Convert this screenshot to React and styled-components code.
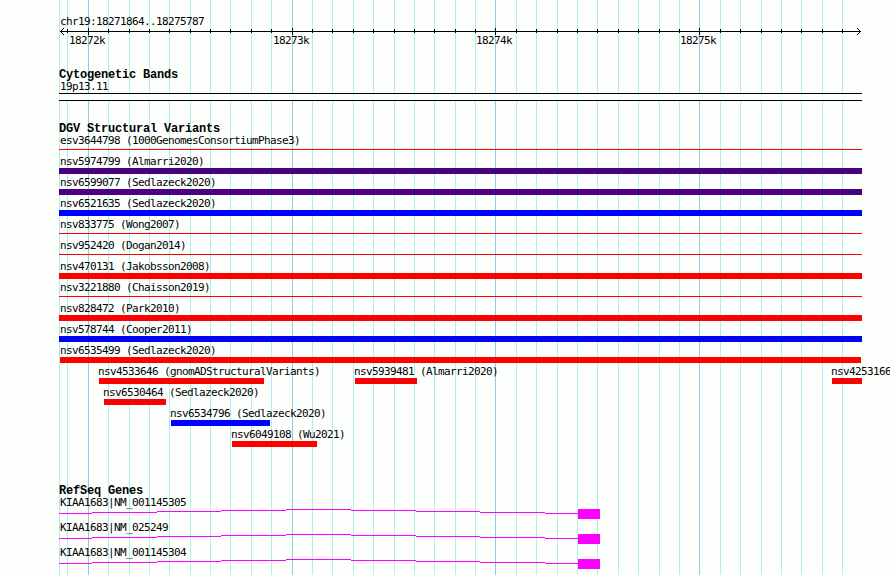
import React from "react";
import styled, { createGlobalStyle } from "styled-components";

const START = 59;
const END = 862;

const MAJOR = [88, 292, 495, 699];
const MINOR = [
  67, 108, 129, 149, 169, 190, 210, 230, 251, 271, 312, 332, 353, 373, 394,
  414, 434, 455, 475, 516, 536, 557, 577, 597, 618, 638, 659, 679, 720, 740,
  761, 781, 801, 822, 842,
];

const RED = "#ff0000";
const BLUE = "#0000ff";
const INDIGO = "#4b0082";

const GlobalStyle = createGlobalStyle`
  body {
    margin: 0;
    background: #fdfffc;
    overflow: hidden;
  }
`;

const Browser = styled.main`
  position: relative;
  width: 890px;
  height: 575px;
  overflow: hidden;
  background: #fdfffc;
  color: #000;
  font-family: "DejaVu Sans Mono", "Liberation Mono", monospace;
`;
const GridLines = styled.svg`
  position: absolute;
  inset: 0;
`;
const Tracks = styled.div`
  position: relative;
  display: flex;
  flex-direction: column;
  width: ${END - START}px;
  padding: 16px 0 0 ${START}px;
`;
const Label = styled.span`
  display: block;
  height: 12px;
  padding-left: 1px;
  font-size: 11px;
  line-height: 11px;
  letter-spacing: -0.622px;
  white-space: pre;
`;
const Ruler = styled.section`
  height: 53px;
`;
const Axis = styled.svg`
  display: block;
  width: 803px;
  height: 7px;
`;
const Ticks = styled.div`
  display: flex;
  padding-left: 9px;
`;
const Tick = styled(Label)`
  flex: none;
  width: ${({ $span }) => $span}px;
  box-sizing: border-box;
`;
const Title = styled.h2`
  height: 12px;
  margin: 0;
  font-family: "Liberation Mono", monospace;
  font-size: 12px;
  font-weight: bold;
  line-height: 13px;
  letter-spacing: -0.201px;
  white-space: pre;
`;
const Track = styled.section`
  height: ${({ $height }) => $height}px;
`;
const Band = styled.div`
  box-sizing: border-box;
  height: 8px;
  border: solid #000;
  border-width: 1px 0;
  background: #fdfffc;
`;
const Row = styled.div`
  display: flex;
  height: 21px;
`;
const Feature = styled.div`
  flex: none;
  width: ${({ $width }) => $width}px;
  margin-left: ${({ $gap }) => $gap}px;
`;
const VariantLabel = styled(Label)`
  padding-left: 0;
  margin-left: ${({ $shift }) => $shift}px;
`;
const Bar = styled.div`
  height: ${({ $thin }) => ($thin ? 1 : 6)}px;
  margin-top: ${({ $thin }) => ($thin ? 2 : 0)}px;
  background: ${({ $color }) => $color};
`;
const Gene = styled.div`
  height: 25px;
`;
const GeneModel = styled.svg`
  display: block;
`;

const full = (name, color, thin) => [{ name, color, thin, from: START, to: END }];

const variants = [
  full("esv3644798 (1000GenomesConsortiumPhase3)", RED, true),
  full("nsv5974799 (Almarri2020)", INDIGO),
  full("nsv6599077 (Sedlazeck2020)", INDIGO),
  full("nsv6521635 (Sedlazeck2020)", BLUE),
  full("nsv833775 (Wong2007)", RED, true),
  full("nsv952420 (Dogan2014)", RED, true),
  full("nsv470131 (Jakobsson2008)", RED),
  full("nsv3221880 (Chaisson2019)", RED, true),
  full("nsv828472 (Park2010)", RED),
  full("nsv578744 (Cooper2011)", BLUE),
  [{ name: "nsv6535499 (Sedlazeck2020)", color: RED, from: 60, to: 861 }],
  [
    { name: "nsv4533646 (gnomADStructuralVariants)", color: RED, from: 99, to: 264 },
    { name: "nsv5939481 (Almarri2020)", color: RED, from: 355, to: 417 },
    { name: "nsv4253166", color: RED, from: 832, to: 862 },
  ],
  [{ name: "nsv6530464 (Sedlazeck2020)", color: RED, from: 104, to: 166 }],
  [{ name: "nsv6534796 (Sedlazeck2020)", color: BLUE, from: 171, to: 270 }],
  [{ name: "nsv6049108 (Wu2021)", color: RED, from: 232, to: 317 }],
];

const genes = [
  "KIAA1683|NM_001145305",
  "KIAA1683|NM_025249",
  "KIAA1683|NM_001145304",
];

// the intron rises to its middle and falls back, one pixel per step
const INTRON =
  "M0 4.5H33M33 3.5H98M98 2.5H162M162 1.5H227M227 .5H292M292 1.5H357M357 2.5H421M421 3.5H486M486 4.5H519";

function Grid() {
  return (
    <GridLines width="890" height="575" shapeRendering="crispEdges">
      {[START, ...MINOR].map((x) => (
        <rect key={x} x={x} y="0" width="1" height="575" fill="#afeeee" />
      ))}
      {MAJOR.map((x) => (
        <rect key={x} x={x} y="0" width="1" height="575" fill="#87ceeb" />
      ))}
    </GridLines>
  );
}

function Scale() {
  return (
    <Ruler>
      <Label>chr19:18271864..18275787</Label>
      <Axis viewBox="0 0 803 7" shapeRendering="crispEdges">
        <rect x="1" y="3" width="801" height="1" />
        {MINOR.map((x) => (
          <rect key={x} x={x - START} y="1" width="1" height="4" />
        ))}
        {MAJOR.map((x) => (
          <rect key={x} x={x - START} y="0" width="1" height="7" />
        ))}
        <path d="M2 2h1v1h-1zM3 1h1v1h-1zM4 0h1v1h-1zM2 4h1v1h-1zM3 5h1v1h-1zM4 6h1v1h-1z" />
        <path d="M800 2h1v1h-1zM799 1h1v1h-1zM798 0h1v1h-1zM800 4h1v1h-1zM799 5h1v1h-1zM798 6h1v1h-1z" />
      </Axis>
      <Ticks>
        <Tick $span={204}>18272k</Tick>
        <Tick $span={203}>18273k</Tick>
        <Tick $span={204}>18274k</Tick>
        <Tick $span={60}>18275k</Tick>
      </Ticks>
    </Ruler>
  );
}

function VariantRow({ features }) {
  return (
    <Row>
      {features.map((f, i) => (
        <Feature
          key={f.name}
          $width={f.to - f.from}
          $gap={f.from - (i ? features[i - 1].to : START)}
        >
          <VariantLabel $shift={f.from === START ? 1 : f.from === 60 ? 0 : -1}>
            {f.name}
          </VariantLabel>
          <Bar $color={f.color} $thin={f.thin} />
        </Feature>
      ))}
    </Row>
  );
}

function App() {
  return (
    <>
      <GlobalStyle />
      <Browser>
        <Grid />
        <Tracks>
          <Scale />
          <Track $height={54}>
            <Title>Cytogenetic Bands</Title>
            <Label>19p13.11</Label>
            <Band />
          </Track>
          <Track $height={362}>
            <Title>DGV Structural Variants</Title>
            {variants.map((features) => (
              <VariantRow key={features[0].name} features={features} />
            ))}
          </Track>
          <Track $height={87}>
            <Title>RefSeq Genes</Title>
            {genes.map((name) => (
              <Gene key={name}>
                <Label>{name}</Label>
                <GeneModel width="541" height="10" shapeRendering="crispEdges">
                  <path d={INTRON} stroke="#ff00ff" fill="none" />
                  <rect x="519" y="0" width="22" height="10" fill="#ff00ff" />
                </GeneModel>
              </Gene>
            ))}
          </Track>
        </Tracks>
      </Browser>
    </>
  );
}

export default App;
